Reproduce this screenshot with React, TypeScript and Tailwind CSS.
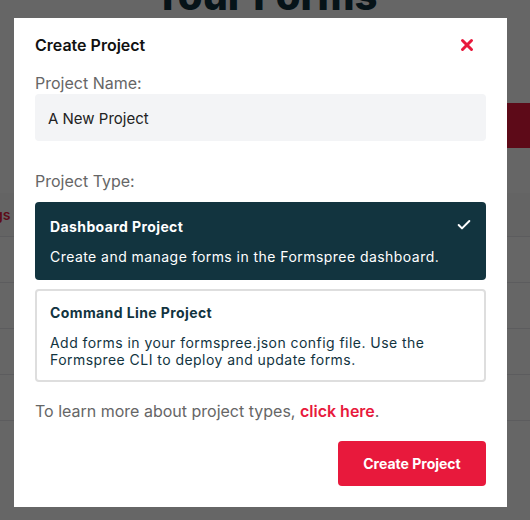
import { Check, X } from 'lucide-react'

export default function App() {
  return (
    <div className="relative w-[530px] h-[520px] overflow-hidden bg-white font-['Inter',sans-serif]">
      {/* Page underneath */}
      <div className="absolute inset-0">
        <h1 className="text-center text-[40px] font-extrabold leading-none text-[#10303c] mt-[-24px]">Your Forms</h1>
        <div className="absolute right-0 top-[103px] w-[40px] h-[45px] bg-[#e8193c] rounded-l" />
        <div className="absolute left-0 right-0 top-[193px]">
          <div className="h-[44px] bg-gray-50 border-b border-gray-200 flex items-center">
            <span className="ml-[-45px] text-[14px] font-semibold text-[#e8193c]">Settings</span>
          </div>
          <div className="h-[46px] border-b border-gray-200" />
          <div className="h-[46px] border-b border-gray-200" />
          <div className="h-[46px] border-b border-gray-200" />
          <div className="h-[46px] border-b border-gray-200" />
        </div>
      </div>
      {/* Overlay */}
      <div className="absolute inset-0 bg-black/60" />
      {/* Modal */}
      <div className="absolute left-[14px] top-[18px] w-[493px] h-[489px] bg-white px-[21px] pt-[16px]">
        <div className="flex items-center justify-between h-[22px]">
          <h2 className="text-[16px] font-semibold text-[#111]">Create Project</h2>
          <X className="w-[18px] h-[18px] text-[#e8193c] mr-[10px]" strokeWidth={4} />
        </div>
        <label className="block mt-[16px] text-[16px] text-[#666] leading-[22px]">Project Name:</label>
        <div className="h-[47px] rounded-[4px] bg-[#f3f4f6] flex items-center px-[13px] pt-[3px] text-[15px] text-[#222]">
          A New Project
        </div>
        <label className="block mt-[29px] text-[16px] text-[#666] leading-[22px]">Project Type:</label>
        <div className="mt-[10px] h-[78px] rounded-[4px] bg-[#12343f] px-[15px] pt-[15px] relative">
          <div className="text-[14px] font-bold text-white tracking-[0.4px] leading-[20px]">Dashboard Project</div>
          <div className="mt-[10px] text-[14px] text-white tracking-[0.45px] leading-[20px]">
            Create and manage forms in the Formspree dashboard.
          </div>
          <Check className="absolute right-[14px] top-[15px] w-[16px] h-[16px] text-white" strokeWidth={3} />
        </div>
        <div className="mt-[9px] h-[93px] rounded-[4px] border-2 border-[#dedede] px-[13px] pt-[12px]">
          <div className="text-[14px] font-bold text-[#12343f] tracking-[0.4px] leading-[20px]">Command Line Project</div>
          <div className="mt-[11px] text-[14px] text-[#12343f] tracking-[0.45px] leading-[17px]">
            Add forms in your formspree.json config file. Use the Formspree CLI to deploy and update forms.
          </div>
        </div>
        <p className="mt-[18px] text-[16px] text-[#666] leading-[22px]">
          To learn more about project types, <span className="font-semibold text-[#e8193c]">click here</span>.
        </p>
        <div className="flex justify-end mt-[19px]">
          <button className="w-[148px] h-[45px] rounded-[4px] bg-[#e8193c] text-white text-[14px] font-bold">
            Create Project
          </button>
        </div>
      </div>
    </div>
  )
}
